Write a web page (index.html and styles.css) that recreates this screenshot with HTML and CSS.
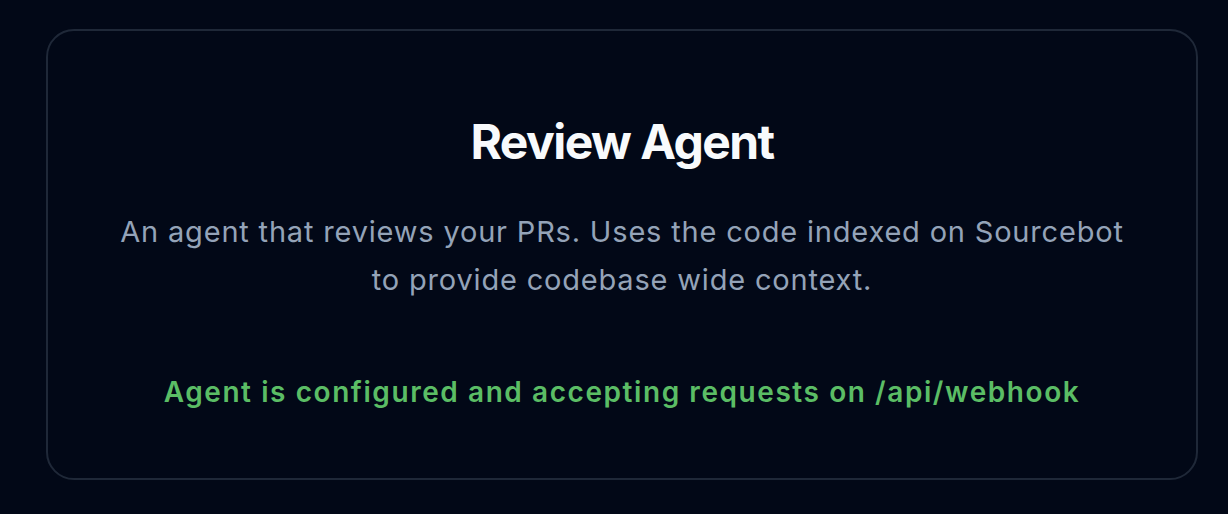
FILE: index.html
```html
<!DOCTYPE html>
<html lang="en">
<head>
<meta charset="utf-8">
<title>Review Agent</title>
<link rel="stylesheet" href="styles.css">
</head>
<body>
<main class="page">
  <section class="card">
    <h1 class="card-title">Review Agent</h1>
    <p class="card-desc">An agent that reviews your PRs. Uses the code indexed on Sourcebot to provide codebase wide context.</p>
    <p class="status">Agent is configured and accepting requests on /api/webhook</p>
  </section>
</main>
</body>
</html>
```

FILE: styles.css
```css
html, body {
  margin: 0;
  padding: 0;
  background: #020817;
  height: 100%;
}
body {
  font-family: "Inter", "Noto Sans", sans-serif;
  color: #f8fafc;
}
.page {
  padding: 29px 30px 34px 46px;
}
.card {
  box-sizing: border-box;
  height: 451px;
  border: 2px solid #1f2838;
  border-radius: 28px;
  padding: 87px 64px 0;
  text-align: center;
  display: flex;
  flex-direction: column;
  align-items: center;
}
.card-title {
  margin: 0;
  font-size: 48px;
  line-height: 48px;
  font-weight: 700;
  letter-spacing: -0.032em;
  color: #f8fafc;
}
.card-desc {
  margin: 42px 0 0;
  max-width: 1020px;
  font-size: 29px;
  line-height: 48px;
  letter-spacing: 0.028em;
  color: #94a3b8;
}
.status {
  margin: 68px 0 0;
  font-size: 28px;
  line-height: 40px;
  font-weight: 600;
  letter-spacing: 0.056em;
  color: #5bbd65;
}
```
